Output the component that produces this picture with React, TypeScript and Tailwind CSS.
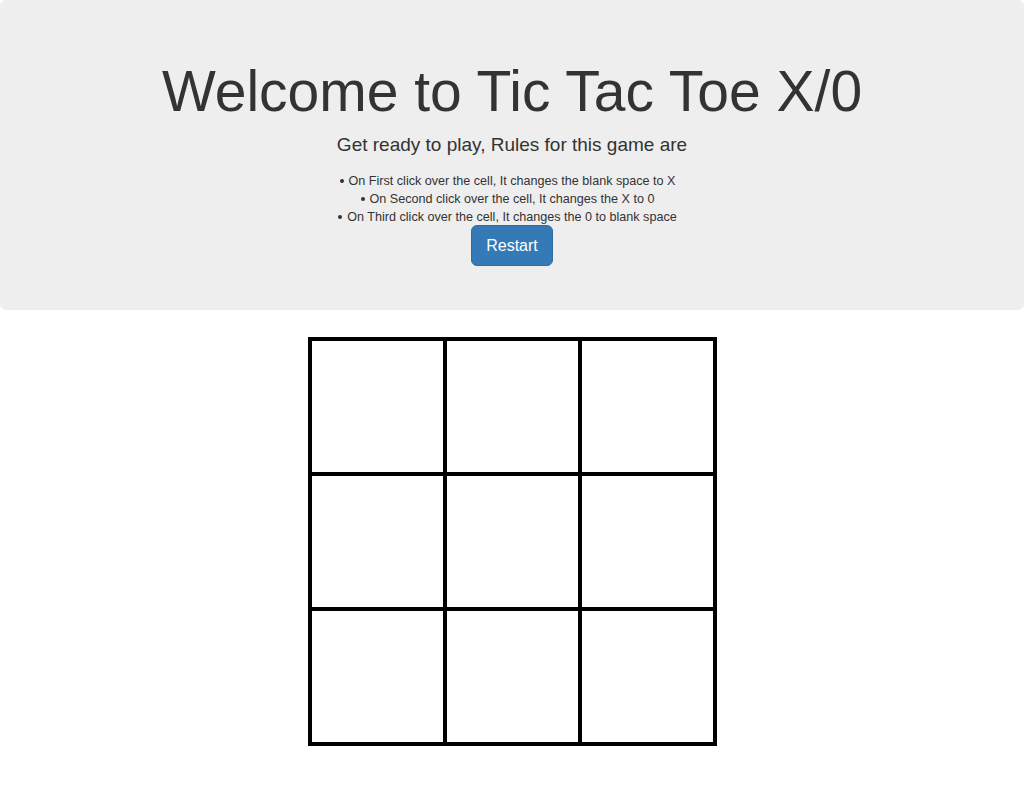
import React from 'react';

const rules = [
  'On First click over the cell, It changes the blank space to X',
  'On Second click over the cell, It changes the X to 0',
  'On Third click over the cell, It changes the 0 to blank space',
];

const App: React.FC = () => {
  const cells = Array.from({ length: 9 });

  return (
    <div className="min-h-screen bg-white font-['Liberation_Sans',Arial,sans-serif] text-[#333]">
      {/* Header */}
      <div className="bg-[#eeeeee] rounded-md pt-[60px] pb-[44px] text-center">
        <h1 className="text-[57px] leading-[1.1]">Welcome to Tic Tac Toe X/0</h1>
        <p className="mt-[9px] text-[19px] leading-[1.4]">Get ready to play, Rules for this game are</p>
        <ul className="mt-[14px] text-[12.6px] leading-[18px]">
          {rules.map((rule) => (
            <li key={rule}>
              <span className="relative inline-block">
                <span className="absolute left-[-9px] top-[7px] w-[4px] h-[4px] rounded-full bg-[#333]" />
                {rule}
              </span>
            </li>
          ))}
        </ul>
        <button className="mt-[-1px] bg-[#337ab7] border border-[#2e6da4] text-white text-[16px] leading-[19px] px-[14px] py-[10px] rounded-md">
          Restart
        </button>
      </div>

      {/* Board */}
      <div className="flex justify-center mt-[27px]">
        <div className="grid grid-cols-[repeat(3,131px)] grid-rows-[repeat(3,131px)] gap-[4px] bg-black p-[4px]">
          {cells.map((_, i) => (
            <div key={i} className="bg-white" />
          ))}
        </div>
      </div>
    </div>
  );
};

export default App;
